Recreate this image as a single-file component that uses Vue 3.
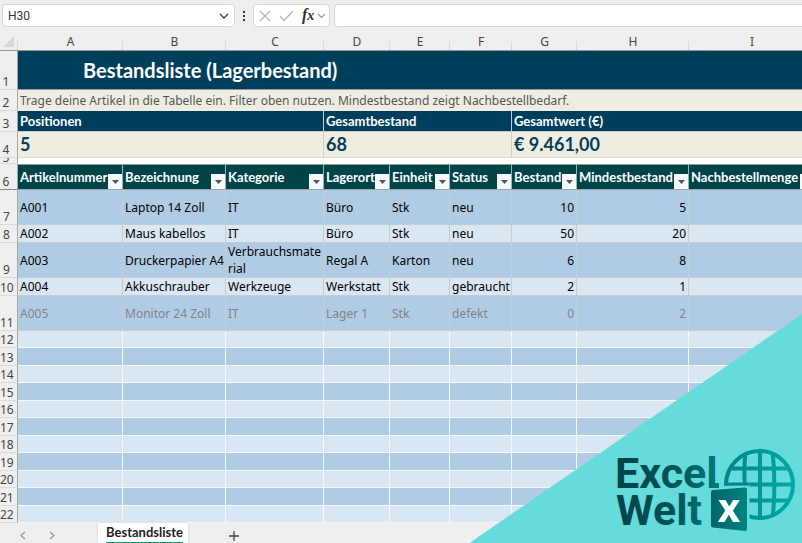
<script setup>
import { ref } from 'vue'

const cellRef = ref('H30')
const formula = ref('')

const letters = ['A', 'B', 'C', 'D', 'E', 'F', 'G', 'H', 'I']
const fields = [
  'Artikelnummer', 'Bezeichnung', 'Kategorie', 'Lagerort', 'Einheit',
  'Status', 'Bestand', 'Mindestbestand', 'Nachbestellmenge',
]
const items = [
  { row: 7, tall: true, cells: ['A001', 'Laptop 14 Zoll', 'IT', 'Büro', 'Stk', 'neu', '10', '5', ''] },
  { row: 8, cells: ['A002', 'Maus kabellos', 'IT', 'Büro', 'Stk', 'neu', '50', '20', ''] },
  { row: 9, tall: true, cells: ['A003', 'Druckerpapier A4', 'Verbrauchsmaterial', 'Regal A', 'Karton', 'neu', '6', '8', ''] },
  { row: 10, cells: ['A004', 'Akkuschrauber', 'Werkzeuge', 'Werkstatt', 'Stk', 'gebraucht', '2', '1', ''] },
  { row: 11, tall: true, muted: true, cells: ['A005', 'Monitor 24 Zoll', 'IT', 'Lager 1', 'Stk', 'defekt', '0', '2', ''] },
]
const emptyRows = [12, 13, 14, 15, 16, 17, 18, 19, 20, 21, 22]
</script>

<template>
  <div class="workbook">
    <div class="formula-bar">
      <div class="box name-box">
        <input v-model="cellRef" aria-label="Namenfeld" />
        <button aria-label="Namen anzeigen">
          <svg width="10" height="6" viewBox="0 0 10 6"><path d="M1 1l4 4 4-4" fill="none" stroke="#444" stroke-width="1.4" /></svg>
        </button>
      </div>
      <svg class="dots" width="4" height="10" viewBox="0 0 4 10"><path d="M1 0h2v2H1zM1 4h2v2H1zM1 8h2v2H1z" fill="#333" /></svg>
      <div class="box tools">
        <button aria-label="Abbrechen">
          <svg width="12" height="12" viewBox="0 0 12 12"><path d="M1 1l10 10M11 1L1 11" fill="none" stroke="#b4b4b4" stroke-width="1.2" /></svg>
        </button>
        <button aria-label="Eingeben">
          <svg width="15" height="12" viewBox="0 0 15 12"><path d="M1 6l4 4.500L14 1" fill="none" stroke="#b4b4b4" stroke-width="1.2" /></svg>
        </button>
        <button class="fx" aria-label="Funktion einfügen"><i>f</i><i class="fx-x">x</i></button>
        <button aria-label="Weitere Funktionen">
          <svg width="9" height="6" viewBox="0 0 9 6"><path d="M1 1l3.500 3.500L8 1" fill="none" stroke="#999" stroke-width="1.2" /></svg>
        </button>
      </div>
      <input v-model="formula" class="box formula" aria-label="Bearbeitungsleiste" />
    </div>

    <div class="grid-area">
      <table>
        <colgroup>
          <col class="c-num" /><col class="c-a" /><col class="c-b" /><col class="c-c" /><col class="c-d" />
          <col class="c-e" /><col class="c-f" /><col class="c-g" /><col class="c-h" /><col />
        </colgroup>
        <thead>
          <tr class="letters">
            <th class="corner"><svg width="11" height="11" viewBox="0 0 11 11"><path d="M11 0v11H0z" fill="#d8d8d8" /></svg></th>
            <th v-for="l in letters" :key="l" scope="col">{{ l }}</th>
          </tr>
        </thead>
        <tbody>
          <tr class="title"><th class="num">1</th><td colspan="9">Bestandsliste (Lagerbestand)</td></tr>
          <tr class="hint"><th class="num">2</th><td colspan="9">Trage deine Artikel in die Tabelle ein. Filter oben nutzen. Mindestbestand zeigt Nachbestellbedarf.</td></tr>
          <tr class="kpi-label">
            <th class="num">3</th><td colspan="3">Positionen</td><td colspan="3">Gesamtbestand</td><td colspan="3">Gesamtwert (€)</td>
          </tr>
          <tr class="kpi-value">
            <th class="num">4</th><td colspan="3">5</td><td colspan="3">68</td><td colspan="3">€ 9.461,00</td>
          </tr>
          <tr class="spacer"><th class="num"><div class="clip">5</div></th><td colspan="9"></td></tr>
          <tr class="fields">
            <th class="num">6</th>
            <th v-for="f in fields" :key="f" scope="col">
              <div class="field">
                <span>{{ f }}</span>
                <button :aria-label="'Filter ' + f">
                  <svg width="7" height="4" viewBox="0 0 7 4"><path d="M0 0h7L3.500 4z" fill="#555" /></svg>
                </button>
              </div>
            </th>
          </tr>
          <tr
            v-for="(item, i) in items" :key="item.row" class="item"
            :class="{ tall: item.tall, dark: i % 2 === 0, muted: item.muted }"
          >
            <th class="num">{{ item.row }}</th>
            <td v-for="(c, k) in item.cells" :key="k" :class="{ right: k > 5, wrap: k === 2 }">{{ c }}</td>
          </tr>
          <tr v-for="(n, i) in emptyRows" :key="n" class="empty" :class="{ dark: i % 2 === 1 }">
            <th class="num">{{ n }}</th>
            <td v-for="l in letters" :key="l"></td>
          </tr>
        </tbody>
      </table>
    </div>

    <div class="tabs">
      <button class="nav" aria-label="Vorheriges Blatt"><svg width="6" height="9" viewBox="0 0 6 9"><path d="M5 1L1 4.500 5 8" fill="none" stroke="#999" stroke-width="1.3" /></svg></button>
      <button class="nav" aria-label="Nächstes Blatt"><svg width="6" height="9" viewBox="0 0 6 9"><path d="M1 1l4 3.500L1 8" fill="none" stroke="#999" stroke-width="1.3" /></svg></button>
      <button class="tab"><span>Bestandsliste</span></button>
      <button class="add" aria-label="Neues Blatt"><svg width="10" height="10" viewBox="0 0 10 10"><path d="M5 0v10M0 5h10" stroke="#444" stroke-width="1.300" /></svg></button>
    </div>

    <svg class="brand" width="334" height="230" viewBox="468 313 334 230" role="img" aria-label="Excel Welt">
      <defs>
        <linearGradient id="word" x1="617" x2="718" y1="0" y2="0" gradientUnits="userSpaceOnUse">
          <stop offset="0" stop-color="#00424a" /><stop offset="0.600" stop-color="#00565b" /><stop offset="1" stop-color="#007a7b" />
        </linearGradient>
        <linearGradient id="globe" x1="724" x2="795" y1="0" y2="0" gradientUnits="userSpaceOnUse">
          <stop offset="0" stop-color="#028488" /><stop offset="1" stop-color="#00aaa8" />
        </linearGradient>
        <linearGradient id="tile" x1="0" x2="1" y1="0" y2="0">
          <stop offset="0" stop-color="#006569" /><stop offset="1" stop-color="#008482" />
        </linearGradient>
        <clipPath id="disc"><circle cx="759.500" cy="483.500" r="34" /></clipPath>
      </defs>
      <path d="M802 313v230H468z" fill="#65dbdb" />
      <g stroke="url(#globe)" stroke-width="4" fill="none">
        <circle cx="759.500" cy="483.500" r="33.500" />
        <path clip-path="url(#disc)" d="M724 467.500h72M724 483.600h72M724 499.500h72M760 448.100v72M745.500 452c-1.500 12-1.500 22-.5 35M772.500 450c2.500 22 2.500 45 0 68" />
      </g>
      <path d="M708 485.500l41.500-2V521l-1 12H708z" fill="#65dbdb" />
      <path d="M724 482.100h25v2.500h-25z" fill="#028488" />
      <path d="M713 489l32-2.500q2 0 2 2V528q0 2-2 2l-32-3.500q-2 0-2-2V491q0-2 2-2z" fill="url(#tile)" />
      <path d="M718.500 499h7l3.700 6.500 4-6.500h6.700l-7 10.700 7.300 11.300h-7.300l-4-7.200-4.400 7.200h-6.700l7.500-11.500z" fill="#fff" />
      <g class="word" fill="url(#word)">
        <text x="615" y="487">Excel</text>
        <path d="M713 482h6v5h-4z" />
        <text x="616" y="524">Welt</text>
      </g>
    </svg>
  </div>
</template>

<style>
body { margin: 0; background: #efefef; }
</style>

<style scoped>
.workbook {
  position: relative;
  display: flex;
  flex-direction: column;
  min-height: 100vh;
  overflow: hidden;
  background: #efefef;
  color: #000;
  font-family: "Noto Sans", sans-serif;
  font-size: 12px;
}
button { padding: 0; border: 0; background: none; font: inherit; color: inherit; }
input { font: inherit; color: inherit; outline: 0; }
svg { display: block; }

.formula-bar { display: flex; align-items: center; padding: 4px 0 0 2px; }
.box {
  box-sizing: border-box;
  display: flex;
  align-items: center;
  height: 23px;
  border: 1px solid #d6d6d6;
  border-radius: 4px;
  background: #fff;
}
.name-box { width: 233px; padding: 0 5px; }
.name-box input { flex: 1; min-width: 0; padding: 0; border: 0; background: none; color: #333; font: 12px Roboto, sans-serif; }
.dots { margin: 0 7px; }
.tools { gap: 8px; width: 77px; padding: 0 2px 0 5px; }
.fx { display: flex; align-items: baseline; font: bold 16px/18px "Liberation Serif", serif; color: #333; }
.fx-x { font-size: 14px; }
.tools button:last-child { margin-left: -5px; }
.formula { flex: 1; min-width: 0; margin-left: 4px; border-right: 0; border-radius: 4px 0 0 4px; }

.grid-area { overflow: hidden; }
table { width: calc(100% + 13px); table-layout: fixed; border-collapse: separate; border-spacing: 0; }
.c-num { width: 18px; }
.c-a { width: 105px; }
.c-b { width: 103px; }
.c-c { width: 98px; }
.c-d { width: 66px; }
.c-e { width: 60px; }
.c-f { width: 62px; }
.c-g { width: 65px; }
.c-h { width: 112px; }
th, td { box-sizing: border-box; padding: 0 2px; text-align: left; line-height: 17px; overflow: hidden; }

.letters th {
  height: 24px;
  padding: 6px 0 0;
  border-bottom: 1px solid #8f9599;
  background: linear-gradient(#efefef, #cfcfcf) right bottom / 1px 14px no-repeat;
  color: #444;
  font-weight: 400;
  text-align: center;
}
.letters .corner { padding: 5px 3px 0; }
.num {
  padding: 0 5px 0 0;
  border-right: 1px solid #a8a8a8;
  border-bottom: 1px solid #dadada;
  background: #efefef;
  color: #444;
  font-weight: 400;
  line-height: 14px;
  text-align: center;
  vertical-align: bottom;
  white-space: nowrap;
}
.item .num, .empty .num { padding-right: 4px; }

.title td, .kpi-label td, .kpi-value td, .field, .tab { font-family: Lato, sans-serif; font-size: 13px; font-weight: 700; }
.title td { height: 39px; padding-left: 65px; border-bottom: 1px solid #8f9ba2; background: #003f5c; color: #fff; font-size: 20px; }
.hint td { height: 21px; background: #efede2; color: #555; }
.kpi-label td { height: 21px; border-right: 1px solid #c4ccd0; border-bottom: 1px solid #c4ccd0; background: #003f5c; color: #fff; }
.kpi-value td { height: 26px; border-right: 1px solid #cfcfcb; border-bottom: 1px solid #dedcd3; background: #efede2; color: #003f5c; font-size: 18px; }
.spacer th, .spacer td { height: 6px; background: #fff; }
.spacer .num { background: #efefef; }
.clip { display: flex; align-items: flex-end; justify-content: center; height: 5px; overflow: hidden; line-height: 11px; }
.fields th:not(.num) { height: 26px; padding-right: 0; border-top: 1px solid #8d9a9c; border-right: 1px solid #9db4b5; border-bottom: 1px solid #9aa5a6; background: #004448; color: #fff; }
.fields .num { border-bottom-color: #888; }
.field { display: flex; align-items: flex-end; height: 24px; }
.field span { flex: 1; min-width: 0; padding-bottom: 3px; white-space: nowrap; }
.field button { display: flex; flex: none; align-items: center; justify-content: center; width: 14px; height: 15px; background: #f7f8fb; }

.item td { border-right: 1px solid #c6ccd2; border-bottom: 1px solid #c6ccd2; background: #d9e7f2; white-space: nowrap; }
.item .wrap { padding-right: 0; overflow-wrap: anywhere; white-space: normal; }
.item:not(.tall) td { height: 18px; }
.item.tall td { height: 35px; }
.item.dark td, .empty.dark td { background: #b0cce5; }
.item.muted td { color: #808488; }
.item .right { text-align: right; }
.empty td { height: 17px; border-right: 1px solid #f4f8fb; border-bottom: 1px solid #f4f8fb; background: #d9e7f2; }
.empty.dark td { height: 18px; }

.tabs { display: flex; flex: 1; align-items: center; min-height: 21px; padding-left: 20px; gap: 23px; }
.tabs .tab { align-self: stretch; margin-left: 20px; padding: 0 5px 0 8px; background: #fff; color: #222; box-shadow: 0 0 2px #c8c8c8; }
.tab span { display: block; border-bottom: 2px solid #0e9a6c; line-height: 19px; }
.add { margin-left: 18px; padding-top: 4px; }
.nav { padding-top: 4px; }

.brand { position: absolute; right: 0; bottom: 0; }
.word { font-family: Roboto, sans-serif; font-size: 43px; font-weight: 700; }
</style>
